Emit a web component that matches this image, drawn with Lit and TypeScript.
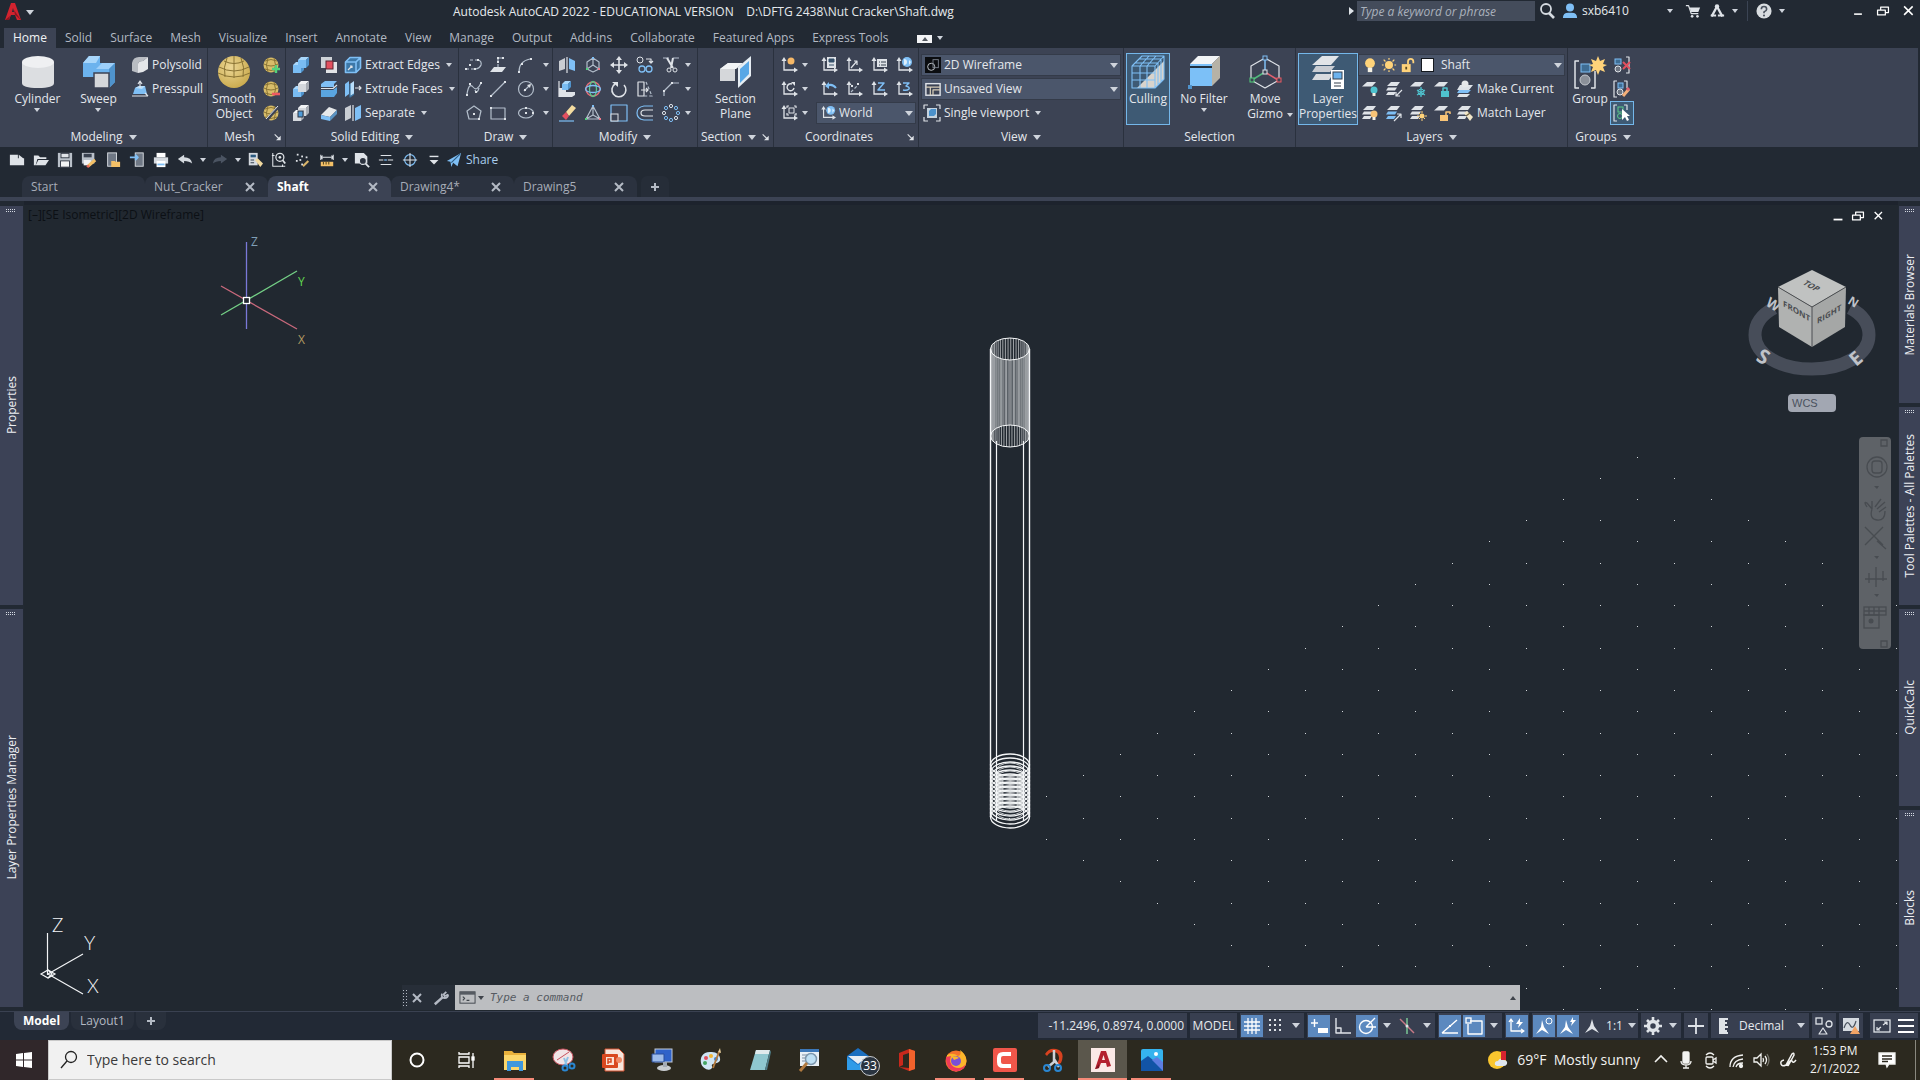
import { LitElement, html, svg, css, nothing } from "lit";
import { customElement } from "lit/decorators.js";
import { classMap } from "lit/directives/class-map.js";

/* ---------- icon drawing ---------- */

const W = "#dfe3e8";
const G = "#b3becb";
const B = "#7fbff5";
const GOLD = "#d8bd6a";
const SUN = "#ffd37a";
const TEAL = "#4fc3cf";

const box = (x: number, y: number, s: number, d: number, f: string, t: string, r: string) => svg`
  <path d="M${x} ${y + d}h${s}v${s}h${-s}z" fill=${f}/>
  <path d="M${x} ${y + d}l${d} ${-d}h${s}l${-d} ${d}z" fill=${t}/>
  <path d="M${x + s} ${y + d}l${d} ${-d}v${s}l${-d} ${d}z" fill=${r}/>`;
const blueBox = (x: number, y: number, s: number, d: number) => box(x, y, s, d, "#79bcf3", "#a9d7fb", "#4f93cc");
const greyBox = (x: number, y: number, s: number, d: number) => box(x, y, s, d, "#d5d9de", "#f2f4f6", "#a8adb5");
const line = (d: string, c = G, w = 1.2) =>
  svg`<path d=${d} fill="none" stroke=${c} stroke-width=${w} stroke-linejoin="round"/>`;
const dash = (d: string, c = G) =>
  svg`<path d=${d} fill="none" stroke=${c} stroke-width="1.2" stroke-dasharray="3 2"/>`;
const fill = (d: string, c = W) => svg`<path d=${d} fill=${c}/>`;
const dots = (pts: number[][], c = W) =>
  pts.map(([x, y]) => svg`<rect x=${x - 1} y=${y - 1} width="2" height="2" fill=${c}/>`);
const meshBall = () => svg`
  <circle cx="8" cy="9" r="7.5" fill=${GOLD}/>
  <path d="M1 8q7 4 14 0M2 5q6-3 12 0M2 13q6 3 12 0M5 2q-3 7 0 14M11 2q3 7 0 14" fill="none" stroke="#8a7434"/>`;
const axes = () => svg`
  <path d="M4 4V14H15" fill="none" stroke=${W} stroke-width="1.3"/>
  <path d="M1.500 5L4 1L6.500 5zM14 11.500L18 14L14 16.500z" fill=${W}/>`;
const sheet = (y: number, c = W) => svg`<path d="M6 ${y}h9l-4 4.500h-10z" fill=${c}/>`;
const stack = (c = W) => svg`
  <path d="M6 2h9l-3 4h-10z" fill=${W}/><path d="M3 7.500h9l-2 3h-9zM3 12h8l-2 3h-8z" fill=${c}/>`;
const bulb = (x: number, y: number, c: string) => svg`
  <circle cx=${x} cy=${y} r="3.500" fill=${c}/><rect x=${x - 1.5} y=${y + 3} width="3" height="3" fill="#f4f0e4"/>`;
const arrowA = () => svg`<path d="M9 2L11 9L16 16L9 12L2 16L7 9z" fill=${W}/>`;

const ICONS: Record<string, unknown> = {
  polysolid: svg`${fill("M1 7Q2 1 8 1H17L12 5Q7 5 7 8V17L1 15z", "#b9bdc3")}${fill("M7 8Q7 5 12 5L17 1V13L12 16L7 17z", "#e4e6e9")}`,
  presspull: svg`${fill("M4 8L8 6H14L16 14H2z", B)}${fill("M4 8L8 6H14L11 9z", "#b9defa")}${line("M9 8V2M7 4L9 1L11 4", W)}${line("M1 16H17M14 13L17 16", W)}`,
  meshPlus: svg`${meshBall()}${line("M13 9V17M9 13H17", "#52d27d", 2.4)}`,
  meshMinus: svg`${meshBall()}${line("M9 14H17", "#ee5a62", 2.6)}`,
  meshCut: svg`${meshBall()}${line("M3 17L16 2", "#3c4354", 3)}${line("M3 15L15 2", W, 1)}`,
  union: svg`${blueBox(1, 6, 8, 3)}${blueBox(6, 1, 8, 3)}`,
  subtract: svg`${blueBox(1, 6, 8, 3)}${greyBox(6, 1, 8, 3)}`,
  intersect: svg`${greyBox(6, 1, 8, 3)}${greyBox(1, 6, 8, 3)}<rect x="6" y="7" width="5" height="6" fill="#4f9ad6" stroke="#2c3442"/>`,
  interfere: svg`<rect x="1" y="1" width="11" height="11" fill="#cfd3d8"/><rect x="6" y="6" width="11" height="11" fill="#e2e4e7"/><rect x="6" y="5" width="7" height="8" fill="#e2505f" stroke="#5a2530"/>`,
  slice: svg`${fill("M1 4L5 1H17L14 4V7H1z", B)}${fill("M1 10H13L17 7V13L14 17H1z", "#5aa5e0")}${line("M1 8.500H13L17 5", W)}`,
  thicken: svg`${fill("M1 11L9 3L17 6L10 13z", "#e6e8ea")}${fill("M1 11L10 13V17L1 15z", B)}${fill("M10 13L17 6V10L10 17z", "#5a93c2")}`,
  extractEdges: svg`${fill("M1 6L6 1H17V12L12 17H1z", "#3d78a8")}${line("M1.500 6H12V16.500H1.500zM1.500 6L6 1.500H16.500L12 6M16.500 1.500V12L12 16.500", B, 1.6)}${line("M4 14L8 10M6 10H8V12", W)}`,
  extrudeFaces: svg`${fill("M1 4L5 1V14L1 17z", B)}${fill("M6 4L10 1V14L6 17z", "#b9defa")}${line("M6 4V17L10 14", "#3d78a8")}${line("M11 8H17M15 6L17 8L15 10", W)}`,
  separate: svg`${fill("M1 4L7 1V14L1 17z", "#c9cdd3")}${line("M9 1V17", W)}${fill("M11 4L17 1V14L11 17z", B)}`,

  poly3d: svg`${dash("M1 13H10M5 4H13", G)}${line("M13 4Q17 5 16 9Q15 12 11 13", G)}${dots([[1, 13], [10, 13], [5, 9], [13, 4]])}`,
  planar: svg`${fill("M5 11H17L13 16H1z")}${dash("M9 11V2H14")}${dots([[9, 2], [14, 2], [9, 6]])}`,
  arc: svg`${line("M2 16Q2 5 13 3", G)}${dots([[2, 16], [5, 8], [14, 3]])}`,
  spline: svg`${line("M2 14Q4 2 8 7T16 3M10 10Q12 15 14 8", G)}${dots([[2, 15], [5, 4], [11, 12], [16, 3]])}`,
  line: svg`${line("M2 16L16 2", G)}${dots([[2, 16], [16, 2]])}`,
  circle: svg`<circle cx="9" cy="9" r="7.5" fill="none" stroke=${G} stroke-width="1.2"/>${line("M7 11L13 5", G)}${dots([[8, 10]])}${fill("M14 4L10 5L13 8z")}`,
  polygon: svg`${line("M9 2L16 7L14 15H4L2 7z", G)}${dots([[9, 10], [14, 15]])}`,
  rect: svg`${line("M2 4H16V15H2z", G)}${dots([[2, 4], [16, 15]])}`,
  ellipse: svg`<ellipse cx="9" cy="9" rx="7.5" ry="5" fill="none" stroke=${G} stroke-width="1.2"/>${dots([[9, 9], [9, 4], [16, 9]])}`,

  mirror3d: svg`${fill("M1 5L7 2V13L1 15z", "#c9cdd3")}${line("M9 1V17", W)}${fill("M11 2L17 5V15L11 13z", B)}`,
  gizmoMove: svg`${line("M9 2L15 6V13L9 16L3 13V6zM9 9V2M9 9L3 13M9 9L15 13", G)}${dots([[9, 2]], B)}${dots([[3, 13]], "#52d27d")}${dots([[15, 13]], "#ee7a8a")}`,
  move: svg`${line("M9 3V15M3 9H15", W, 1.6)}${fill("M9 0L12 4H6zM9 18L12 14H6zM0 9L4 6V12zM18 9L14 6V12z")}`,
  copy: svg`<circle cx="4" cy="4" r="3" fill="none" stroke=${W}/>${line("M10 3H15V7M13 5L15 7L17 5", W)}<circle cx="6" cy="13" r="3" fill="none" stroke=${B} stroke-width="1.3"/><circle cx="13" cy="13" r="3" fill="none" stroke=${B} stroke-width="1.3"/>`,
  trim: svg`${line("M1 2H7M11 2H17", G)}${line("M5 2L11 12M11 2L9 12", W, 2)}<circle cx="7" cy="14" r="2" fill="none" stroke=${W}/><circle cx="13" cy="14" r="2" fill="none" stroke=${W}/>`,
  align3d: svg`${fill("M1 8H8V12H17V15L14 17H1z", W)}${blueBox(4, 1, 6, 3)}${line("M1 1V17", W)}`,
  rotate3d: svg`<circle cx="9" cy="9" r="7" fill="none" stroke="#e8707a" stroke-width="1.3"/><ellipse cx="9" cy="9" rx="3.500" ry="7.500" fill="none" stroke="#5cc98a" stroke-width="1.3"/><ellipse cx="9" cy="9" rx="7.500" ry="3.500" fill="none" stroke=${B} stroke-width="1.3"/>`,
  rotate: svg`${line("M5 4A7 7 0 1 0 14 5", W, 1.6)}${fill("M2 2H8V7z")}`,
  stretch: svg`${line("M2 2H8V16H2z", W)}${dash("M10 2L16 16H8")}${line("M5 10H12M10 8L12 10L10 12", W)}`,
  chamfer: svg`${line("M2 16V11L10 3H17", G)}${dots([[2, 11], [10, 3]])}`,
  erase: svg`${fill("M8 8L14 1L18 4L11 12z", "#f4dca0")}${fill("M8 8L11 12L8 16L4 12z", "#e2505f")}${line("M1 17H16", B)}`,
  scale3d: svg`${line("M9 2L16 15H2zM9 2V11L2 15M9 11L16 15", G)}${dots([[9, 2]], B)}${dots([[2, 15]], "#52d27d")}${dots([[16, 15]], "#ee7a8a")}`,
  scale: svg`${line("M1 17V1H17V17z", B)}<rect x="1" y="10" width="7" height="7" fill="#3c4354" stroke=${W}/>`,
  offset: svg`${line("M17 2H8Q1 3 1 9T8 16H17", B)}${line("M17 6H9Q5 6 5 9T9 12H17", W)}`,
  array: svg`${[[9, 2], [14, 4], [16, 9], [14, 14], [9, 16], [4, 14], [2, 9], [4, 4]].map(([x, y], i) => svg`<circle cx=${x} cy=${y} r="1.600" fill="none" stroke=${i % 3 ? B : W}/>`)}`,

  ucsOrigin: svg`${axes()}<circle cx="11" cy="5" r="3.500" fill="#f6b867"/>`,
  ucsPrev: svg`${axes()}<path d="M12 4A3.500 3.500 0 1 0 14 8" fill="none" stroke=${W} stroke-width="1.400"/><path d="M11 2h4v4z" fill=${W}/>`,
  ucsObj: svg`${axes()}${line("M7 4V2H9M14 2H16V4M16 9V11H14M9 11H7V9", W)}<rect x="9" y="4" width="5" height="5" fill="none" stroke=${W}/>`,
  ucsNamed: svg`${axes()}<rect x="7" y="1" width="9" height="11" fill=${W}/><path d="M9 3h5v3h-5zM9 9h5" fill="#35506b" stroke="#35506b"/>`,
  ucsView: svg`${axes()}${line("M6 12L12 5M12 9V5H9", W)}`,
  ucsTable: svg`${axes()}<rect x="7" y="3" width="10" height="8" fill=${W}/><path d="M9 6h1M9 9h1M11 6h5M11 9h5" stroke="#35404f"/>`,
  ucsWorld: svg`${axes()}<circle cx="12" cy="6" r="5" fill=${B}/><path d="M9 3q3 0 3 3t-3 3zM14 4l2 2-2 3z" fill="#dff0fd"/>`,
  ucsX: svg`${axes()}${line("M7 6Q12 3 16 8", B, 2)}${fill("M5 6L9 2V9z", B)}`,
  ucs3pt: svg`${axes()}${dash("M6 12L13 5")}${dots([[7, 6], [13, 4]])}`,
  ucsZ: svg`${axes()}${line("M8 3H14L8 10H15", B, 1.5)}`,
  ucsThree: svg`${axes()}${line("M8 3H14L11 6Q15 7 14 9Q12 11 8 10", B, 1.5)}`,

  wireStyle: svg`<rect width="18" height="18" fill="#0b0d10"/><circle cx="7" cy="11" r="4" fill="none" stroke="#cfd3d8"/><rect x="9" y="3" width="6" height="9" fill="none" stroke="#7d8590"/>`,
  viewIcon: svg`<rect x="1" y="3" width="16" height="13" fill="#3c4354" stroke=${W} stroke-width="1.600"/>${line("M1 7H17M6 16V7M9 16V10H17", "#d6cdb8", 1.4)}`,
  viewport: svg`${line("M1 5V1H5M13 1H17V5M17 13V17H13M5 17H1V13", W)}<rect x="4" y="4" width="10" height="10" fill="#c6d3df"/><path d="M6 7l2-2h5v5l-2 2H6z" fill="#4b91cb"/>`,

  bulbOn: svg`<circle cx="9" cy="7" r="5.500" fill=${SUN}/><rect x="6.500" y="12" width="5" height="5" fill="#f4f0e4"/>`,
  sun: svg`<circle cx="9" cy="9" r="4.500" fill=${SUN}/>${line("M9 1V3M9 15V17M1 9H3M15 9H17M3 3L5 5M13 13L15 15M3 15L5 13M13 5L15 3", SUN, 1.4)}`,
  unlock: svg`<rect x="2" y="8" width="10" height="9" fill=${SUN}/><rect x="6" y="11" width="2" height="3" fill="#5b4a20"/>${line("M9 8V5Q9 2 12 2T15 5V7", SUN, 2)}`,
  layOff: svg`${sheet(2)}${bulb(13, 10, TEAL)}`,
  layIso: svg`${stack()}${line("M17 10L11 16M11 12V16H15", W)}`,
  layFreeze: svg`${sheet(2)}<circle cx="12" cy="12" r="3" fill="none" stroke=${TEAL}/>${line("M12 7V17M8 10L16 15M16 10L8 15", TEAL, 1.2)}`,
  layLock: svg`${sheet(2)}<rect x="8" y="11" width="8" height="6" fill=${TEAL}/>${line("M10 11V8H14V11", TEAL, 1.5)}`,
  makeCurrent: svg`${fill("M4 5h13l-4 5h-12z")}${fill("M3 10h12l-3 3h-11z", B)}${fill("M3 14h11l-3 3h-10z")}<circle cx="9" cy="4" r="3.500" fill="#e6e8ea"/>`,
  layOn: svg`${stack()}${bulb(13, 10, "#f8c477")}`,
  layUniso: svg`${stack(B)}${line("M9 17L16 10M12 10H16V14", W)}`,
  layThaw: svg`${stack()}<circle cx="13" cy="12" r="2.500" fill=${SUN}/>${line("M13 7V9M13 15V17M8 12H10M16 12H18M10 9L11 10M15 14L16 15M10 15L11 14", SUN, 1)}`,
  layUnlock: svg`${sheet(2)}<rect x="7" y="11" width="8" height="6" fill="#f8c477"/>${line("M13 11V8H17V10", "#f8c477", 1.5)}`,
  matchLayer: svg`${stack()}${fill("M8 9L11 7L17 13L14 17z", "#f1e6c8")}${line("M10 12L14 9", "#6f6240")}`,
  ungroup: svg`${line("M13 1H16V17H13", W)}<rect x="2" y="3" width="6" height="5" fill="#3f6d93" stroke=${B}/><circle cx="5" cy="13" r="3" fill="#6d7480" stroke=${W}/>${line("M10 6L17 13M17 6L10 13", "#e2505f", 2)}`,
  groupEdit: svg`${line("M4 1H1V17H4M11 1H14V8", W)}<rect x="5" y="3" width="5" height="5" fill="#3f6d93" stroke=${B}/><circle cx="7" cy="12" r="3" fill="#6d7480" stroke=${W}/>${line("M10 16L16 9", "#f4b07a", 3)}${line("M14 10L16 8", "#e2606f", 3)}`,
  groupSel: svg`${line("M4 1H1V17H4M11 1H14V6", W)}<rect x="5" y="3" width="5" height="5" fill="none" stroke="#5cc98a"/><circle cx="7" cy="12" r="2.500" fill="none" stroke="#5cc98a"/>${fill("M9 5V16L12 13L14 17L16 16L14 12H17z", "#fff")}`,

  new: fill("M1 3H10V7H17V15H1zM11 3L16 7H11z"),
  open: svg`${fill("M1 4H6L8 6H15V8H5L3 15H1z")}${fill("M6 9H18L14 15H3z")}`,
  save: svg`${fill("M1 1H17V17H1z", "#b9c0c9")}<rect x="4" y="1" width="10" height="6" fill="#2b323e"/><rect x="5" y="2" width="8" height="4" fill=${W}/><rect x="4" y="10" width="10" height="7" fill="#f3f4f5" stroke="#2b323e"/>`,
  saveAs: svg`${fill("M1 1H15V13H1z", "#b9c0c9")}<rect x="3" y="2" width="9" height="4" fill="#3a4250"/><rect x="3" y="9" width="8" height="6" fill="#f3f4f5"/>${line("M8 16L16 9", "#f3c067", 3.4)}${line("M7 17L9 15", "#e86a5a", 3)}`,
  fromWeb: svg`<rect x="3" y="1" width="10" height="15" fill="#6f7885" stroke=${W}/>${fill("M7 10H11L12 11H17V17H7z", "#f3c067")}`,
  toWeb: svg`<rect x="7" y="1" width="9" height="15" fill="#6f7885" stroke=${W}/>${line("M1 6H9M7 3L10 6L7 9", B, 2)}`,
  print: svg`<rect x="4" y="1" width="10" height="5" fill="#fff"/>${fill("M1 6H17V13H1z", "#d5dae0")}<rect x="4" y="10" width="10" height="7" fill="#fff"/>${line("M5 14H13", B, 2)}`,
  undo: svg`${fill("M1 8L8 3V6Q16 6 17 13Q14 10 8 10V13z", "#d5dae0")}`,
  redo: svg`${fill("M17 8L10 3V6Q2 6 1 13Q4 10 10 10V13z", "#4b5462")}`,
  matchProp: svg`<rect x="2" y="1" width="10" height="14" fill="#d5dae0"/><path d="M4 3h6v3H4z" fill="#2b5a80"/>${fill("M9 9L12 7L18 13L15 17z", "#f1d9a0")}${line("M4 9H8M4 12H8", "#35404f")}`,
  zoomObj: svg`${line("M2 1V16H16M1 4H4M13 14V17", W)}<circle cx="10" cy="6" r="4.500" fill="none" stroke=${W} stroke-width="1.400"/><circle cx="10" cy="6" r="1.500" fill=${W}/>${line("M13 9L16 13", W, 2)}`,
  points: svg`${dots([[3, 3], [8, 5], [2, 10], [6, 9], [8, 14], [13, 6]])}${line("M9 16L15 10", "#d9b46a", 2.4)}`,
  measure: svg`${line("M2 3V9M16 3V9M2 6H16M4 4L2 6L4 8M14 4L16 6L14 8", W)}<rect x="2" y="11" width="14" height="5" fill="#f3c067"/>${line("M5 11V14M8 11V14M11 11V14", "#5b4a20")}`,
  preview: svg`${fill("M1 1H11L15 5V13H1z")}<circle cx="10" cy="10" r="4" fill="#2b323e" stroke=${W} stroke-width="1.500"/>${line("M13 13L17 17", W, 2)}`,
  layers2: svg`${line("M3 4H15M1 9H6M11 9H17M3 14H15", W, 1.2)}${line("M7 9H10", B, 1.4)}`,
  target: svg`<circle cx="9" cy="9" r="6" fill="none" stroke=${B} stroke-width="1.300"/>${line("M9 1V17M1 9H17", W)}`,
  more: svg`${line("M4 5H14", W, 1.6)}${fill("M4 9H14L9 14z")}`,
  send: svg`${fill("M1 10L17 1L13 16L8 12L6 17L5 11z", B)}${line("M6 12L16 2", "#2b5a80")}`,

  search: svg`<circle cx="8" cy="7" r="5" fill="none" stroke="#d5dae0" stroke-width="1.800"/>${line("M11 11L16 16", "#d5dae0", 2.6)}`,
  user: svg`<circle cx="9" cy="5" r="4.500" fill=${B}/>${fill("M1 17Q1 10 9 11Q17 10 17 17z", B)}`,
  cart: svg`${line("M1 3H4L7 12H15", W, 1.4)}${fill("M5 5H17L15 10H7z")}<circle cx="8" cy="15" r="1.500" fill=${W}/><circle cx="14" cy="15" r="1.500" fill=${W}/>`,
  appA: svg`${line("M3 15L9 4L15 15", W, 2.6)}${line("M2 14H8M10 14H17", W, 2.4)}<circle cx="9" cy="4" r="2.500" fill=${W}/>`,
  help: svg`<circle cx="9" cy="9" r="8.500" fill="#d9dde1"/>${line("M6 7Q6 4 9 4T12 7Q12 8.500 9 10V11.500", "#4a525e", 1.800)}<circle cx="9" cy="14" r="1.200" fill="#4a525e"/>`,
  wmin: line("M4 13H14", "#fff", 2),
  wrestore: line("M2 8H12V14H2zM6 8V4H16V11H12", "#fff", 1.6),
  wclose: line("M4 3L15 14M15 3L4 14", "#fff", 2),
  close: line("M5 5L13 13M13 5L5 13", "#b4bac4", 2),
  plus: line("M9 5V13M5 9H13", "#b4bac4", 2),
  launcher: svg`${line("M4 5L11 12", W, 1.6)}${fill("M13 7V14H6z")}`,

  terminal: svg`<rect x="1" y="3" width="16" height="12" fill="none" stroke="#3f444b"/><rect x="1" y="3" width="16" height="3" fill="#555a61"/>${line("M4 8L6 10L4 12M8 12H11", "#3f444b")}`,
  wrench: svg`${line("M2 16L11 8", "#b4bac4", 2.8)}${line("M15 2L12 5L13 7L17 5M10 4Q9 9 13 9T17 5", "#b4bac4", 2)}`,

  sGrid: line("M1 5H17M1 9H17M1 13H17M5 1V17M9 1V17M13 1V17", "#fff", 1.3),
  sSnap: dots([[3, 3], [8, 3], [13, 3], [3, 8], [8, 8], [13, 8], [3, 13], [8, 13], [13, 13]]),
  sDyn: svg`${line("M1 6H8M4.500 2V10", "#fff", 1.4)}<rect x="8" y="11" width="10" height="5" fill="#fff"/>`,
  sOrtho: svg`${line("M2 1V16H17M2 11H7V16", W, 1.4)}`,
  sPolar: svg`<circle cx="8" cy="10" r="6.500" fill="none" stroke="#fff" stroke-width="1.400"/>${line("M8 10L17 1M8 10H18", "#fff", 1.4)}`,
  sIso: svg`${line("M9 1V17", "#7fd09a", 1.4)}${line("M2 2L16 16", "#c87a86", 1.4)}<circle cx="9" cy="9" r="1.500" fill=${W}/>`,
  sTrack: svg`${line("M1 16H17M1 16L16 3", "#fff", 1.4)}${dots([[9, 9]], "#fff")}`,
  sOsnap: svg`${line("M5 4H17V17H3V7", "#fff", 1.4)}<rect x="1" y="1" width="5" height="5" fill="none" stroke="#fff" stroke-width="1.300"/>`,
  sDucs: svg`${line("M3 3V14H15M1 5L3 2L5 5M13 12L16 14L13 16", "#fff", 1.3)}${fill("M12 1L8 7H11L10 11L15 5H12z", "#fff")}`,
  sAnnoVis: svg`${fill("M7 3L9 10L14 17L7 13L1 17L6 10z", "#fff")}<circle cx="14" cy="4" r="3" fill="none" stroke="#fff"/>`,
  sAnnoAuto: svg`${fill("M7 3L9 10L14 17L7 13L1 17L6 10z", "#fff")}${fill("M14 0L11 5H13L12 9L17 3H14z", "#fff")}`,
  sAnno: arrowA(),
  sGear: svg`<circle cx="9" cy="9" r="4.500" fill="none" stroke=${W} stroke-width="3.500"/>${line("M9 0V4M9 14V18M0 9H4M14 9H18M3 3L5 5M13 13L15 15M3 15L5 13M13 5L15 3", W, 2.6)}`,
  sPlus: line("M9 1V17M1 9H17", W, 1.8),
  sRuler: svg`${fill("M5 1H14V3H11V5H13V7H11V9H14V11H11V13H13V15H14V17H5z")}`,
  sShapes: svg`<rect x="1" y="1" width="6" height="6" fill="none" stroke=${W} stroke-width="1.300"/><circle cx="14" cy="7" r="3" fill="none" stroke=${W} stroke-width="1.300"/>${line("M8 11L12 17H4z", W)}`,
  sHw: svg`<rect x="1" y="1" width="16" height="13" fill="#d5dae0"/>${line("M2 11Q5 2 8 8T14 4", "#4a525e")}${fill("M13 9L18 17H8z", "#f2a465")}`,
  sFull: svg`<rect x="1" y="3" width="16" height="12" fill="none" stroke=${W} stroke-width="1.300"/>${line("M10 8L14 5M11 5H14V8M8 10L4 13M4 10V13H7", W)}`,
  sMenu: line("M1 3H17M1 9H17M1 15H17", "#fff", 2),
};

const LARGE: Record<string, unknown> = {
  cylinder: svg`<path d="M1 7V28Q1 33 17 33T33 28V7z" fill="#dcdee1"/><ellipse cx="17" cy="7" rx="16" ry="6" fill="#eff0f2"/>`,
  sweep: svg`${fill("M1 8L7 1H18V8H33L33 27L27 33H14V22H1z", "#6cb3ee")}${fill("M1 8L7 1H18L14 8z", "#a9d7fb")}${fill("M14 14L20 8H33L27 14z", "#9dcff9")}${fill("M27 14L33 8V27L27 33z", "#4f93cc")}<rect x="12" y="18" width="15" height="15" fill="#d5d7da" stroke="#3c4354" stroke-width="1.500"/>`,
  smooth: svg`<defs><radialGradient id="gold" cx=".4" cy=".35" r=".7"><stop offset="0" stop-color="#ecd795"/><stop offset="1" stop-color="#c9a94c"/></radialGradient></defs><circle cx="17" cy="17" r="16" fill="url(#gold)"/>${line("M2 12Q17 20 32 12M1 18Q17 26 33 18M7 6Q17 11 27 6M17 1V23M10 3Q6 12 8 22M24 3Q28 12 26 22", "#8a7434", 1)}`,
  section: svg`${fill("M1 14L9 8H22L16 14V26H1z", "#d5d7da")}${fill("M1 14L9 8H24L17 14z", "#f2f4f6")}${fill("M19 12L32 1V21L19 33z", "#e6edf3")}${fill("M21 14L30 6V19L21 28z", "#58a7e6")}`,
  culling: svg`${fill("M6 33L33 6V24L24 33z", "#d8d3cc")}${line("M1 11V33H24V11zM1 11L11 1H33V24L24 33M24 11L33 1M9 11V33M16 11V33M1 18H24M1 25H24M4 8H27M8 4H30M9 11L18 1M16 11L25 1M27 8V30M30 5V27", B, 1.1)}`,
  noFilter: svg`${box(3, 1, 22, 8, "#7cc0f7", "#f2f4f6", "#b6b2a6")}<path d="M3 12h22" fill="none" stroke="#20303f" stroke-width="2"/><rect x="1" y="30" width="4" height="4" fill="#4f93cc"/>`,
  gizmo: svg`${line("M17 3L31 11V25L17 33L3 25V11z", W, 1.2)}${line("M17 17V3", B, 1.5)}${line("M17 17L4 25", "#52b87d", 1.5)}${line("M17 17L30 25", "#e2606f", 1.5)}<rect x="15" y="15" width="4" height="4" fill="#3c4354" stroke=${W}/><rect x="15" y="1" width="4" height="4" fill="#3c4354" stroke=${B}/><rect x="2" y="23" width="4" height="4" fill="#3c4354" stroke="#52d27d"/><rect x="29" y="23" width="4" height="4" fill="#3c4354" stroke="#ee5a62"/>`,
  layerProps: svg`${fill("M11 1H28L20 10H1z", "#e2e5e8")}${fill("M5 11H24L19 17H1z", "#c9cdd3")}${fill("M5 19H22L18 25H1z", "#d8dbdf")}<rect x="20" y="15" width="13" height="19" fill="#fff"/><rect x="22" y="17" width="9" height="7" fill="#6cb3ee" stroke="#35404f"/>${line("M23 28H30M23 31H30", "#35404f")}`,
  group: svg`${line("M6 6H2V33H6M18 33H22V16", W, 1.5)}<rect x="8" y="9" width="9" height="8" fill="#3f6d93" stroke=${B}/><circle cx="12" cy="25" r="5" fill="#8b9099" stroke="#c3c7cd"/><path d="M25 1l2 5 5-2-2 5 4 1-4 2 2 5-5-2-2 5-2-5-5 2 2-5-4-2 4-1-2-5 5 2z" fill=${SUN}/>`,
};

const ic = (name: string, size = 18) =>
  html`<svg class="ic" width=${size} height=${size} viewBox="0 0 18 18" aria-hidden="true">${ICONS[name]}</svg>`;
const big = (name: string) =>
  html`<svg class="ic" width="34" height="34" viewBox="0 0 34 34" aria-hidden="true">${LARGE[name]}</svg>`;
const caret = (cls = "") => html`<span class="caret ${cls}"></span>`;

const shared = css`
  :host, * { box-sizing: border-box; }
  button, input, select { font: inherit; color: inherit; margin: 0; padding: 0; border: 0; background: none; border-radius: 0; }
  button { display: flex; align-items: center; justify-content: center; white-space: nowrap; }
  a { color: inherit; text-decoration: none; }
  .ic { display: block; flex: none; }
  .caret { flex: none; width: 0; height: 0; border: 3px solid transparent; border-top: 4px solid #cfd4dc; border-bottom: 0; }
  .caret.mid { border-width: 4px; border-top-width: 5px; border-bottom: 0; }
  .caret.up { border-top: 0; border-bottom: 4px solid #555a61; }
  .caret.east { border: 4px solid transparent; border-left: 5px solid #dfe3e8; border-right: 0; }
  .spacer { flex: 1; }
`;

/* ---------- title bar ---------- */

@customElement("cad-title")
class CadTitle extends LitElement {
  static styles = [shared, css`
    :host { display: flex; height: 28px; align-items: flex-start; color: #e6e9ed; }
    .app { width: 453px; height: 24px; padding-left: 4px; display: flex; align-items: center; gap: 4px; }
    .name { margin: 0; font-size: 12px; font-weight: 400; line-height: 24px; white-space: pre; }
    .end { display: flex; align-items: center; height: 22px; }
    .tool { width: 24px; height: 22px; }
    .drop { width: 12px; height: 22px; }
    input { width: 178px; height: 20px; padding: 0 3px; background: #444c5b; font-style: italic; }
    input::placeholder { color: #aab1bc; opacity: 1; }
    .user { width: 122px; height: 22px; justify-content: space-between; padding: 0 8px 0 3px; }
    .who { display: flex; align-items: center; gap: 4px; }
    .rule { width: 1px; height: 20px; margin: 0 4px 0 6px; background: #3b4454; }
    .win { display: flex; margin-left: 57px; }
    .win button { width: 25px; height: 24px; }
  `];
  render() {
    return html`
      <div class="app">
        <button aria-label="Application menu">
          <svg class="ic" width="18" height="20" viewBox="0 0 18 20" aria-hidden="true">
            <path d="M1 18L7 1H11L17 18H13L11 13H7L5 18z" fill="#d2232f"/>
            <path d="M1 18L6 14L5 18zM17 18L10 8L11 13z" fill="#8d1520"/>
            <path d="M8 10L9 6L10 10z" fill="#222933"/>
          </svg>
        </button>
        ${caret("mid")}
      </div>
      <h1 class="name">Autodesk AutoCAD 2022 - EDUCATIONAL VERSION    D:\\DFTG 2438\\Nut Cracker\\Shaft.dwg</h1>
      <span class="spacer"></span>
      <div class="end">
        <button class="drop" aria-label="Collapse search">${caret("east")}</button>
        <input type="search" aria-label="Search help" placeholder="Type a keyword or phrase" />
        <button class="tool" aria-label="Search">${ic("search")}</button>
        <button class="user"><span class="who">${ic("user", 16)}sxb6410</span>${caret()}</button>
        <button class="tool" aria-label="Cart">${ic("cart", 16)}</button>
        <button class="tool" aria-label="Autodesk apps">${ic("appA", 16)}</button>
        <button class="drop" aria-label="Apps menu">${caret()}</button>
        <span class="rule"></span>
        <button class="tool" aria-label="Help">${ic("help", 16)}</button>
        <button class="drop" aria-label="Help menu">${caret()}</button>
        <div class="win">
          <button aria-label="Minimize">${ic("wmin", 14)}</button>
          <button aria-label="Restore">${ic("wrestore", 14)}</button>
          <button aria-label="Close">${ic("wclose", 14)}</button>
        </div>
      </div>`;
  }
}

/* ---------- ribbon ---------- */

@customElement("cad-ribbon")
class CadRibbon extends LitElement {
  static styles = [shared, css`
    :host { display: block; color: #e4e7ec; }
    .tabs { display: flex; height: 20px; padding-left: 4px; align-items: flex-end; color: #b3b9c3; }
    .tabs button { height: 20px; padding: 0 9px; }
    .tabs .on { background: #3c4354; color: #f1f3f5; }
    .tabs .flip { width: 15px; height: 8px; padding: 0; margin: 0 4px 5px 20px; background: #f3f4f6; }
    .tabs .menu { width: 8px; padding: 0; }
    .bar { display: flex; height: 99px; background: #3c4354; margin-right: 2px; }
    .panel { flex: none; display: flex; flex-direction: column; border-right: 1px solid #2a313e; }
    .body { flex: 1; display: flex; align-items: flex-start; padding-top: 5px; }
    .foot { display: flex; height: 20px; align-items: center; }
    .foot .name { flex: 1; gap: 6px; }
    .foot .launch { width: 14px; height: 18px; }
    .modeling { width: 208px; } .modeling .body { padding-left: 7px; }
    .mesh { width: 78px; }
    .solid { width: 173px; } .solid .body { padding-left: 3px; }
    .draw { width: 94px; } .draw .body { padding-left: 3px; }
    .modify { width: 145px; } .modify .body { padding-left: 1px; }
    .section { width: 76px; }
    .coords { width: 145px; } .coords .body { padding-left: 3px; }
    .view { width: 205px; } .view .body { padding: 5px 2px 0; }
    .select { width: 172px; } .select .body { padding-left: 2px; }
    .layers { width: 272px; } .layers .body { padding-left: 2px; }
    .groups { width: 70px; border-right: 0; } .groups .body { padding-left: 2px; }
    .large { height: 72px; flex-direction: column; justify-content: flex-start; border: 1px solid transparent; padding-top: 1px; line-height: 15px; white-space: normal; gap: 2px; }
    .large.on, .small.on { background: #3e5a74; border: 1px solid #74b7ea; }
    .w61 { width: 61px; } .w52 { width: 52px; } .w75 { width: 75px; } .w44 { width: 44px; }
    .w68 { width: 68px; } .w54 { width: 54px; } .w60 { width: 60px; } .w40 { width: 40px; }
    .large .lines { display: flex; flex-direction: column; align-items: center; }
    .large .side { display: flex; align-items: center; gap: 4px; margin-right: -10px; }
    .large .caret { margin-top: 2px; }
    .grid { display: grid; grid-auto-rows: 24px; align-items: center; justify-items: center; }
    .gtext { justify-items: start; }
    .g1 { grid-template-columns: 24px; }
    .gsolid { grid-template-columns: 28px 25px auto; justify-items: start; }
    .gdraw { grid-template-columns: 24px 24px 32px 8px; }
    .gmodify { grid-template-columns: repeat(5, 26px) 8px; }
    .gcoords { grid-template-columns: 24px 8px 7px repeat(4, 25px); }
    .glayers { grid-template-columns: repeat(4, 24px) auto; justify-items: start; }
    .gview { flex: 1; grid-template-columns: 1fr; justify-items: stretch; }
    .small { width: 24px; height: 24px; border: 1px solid transparent; }
    .text { height: 24px; padding: 0 2px; gap: 3px; }
    .text .caret { margin-left: 3px; }
    .combo { display: flex; align-items: center; gap: 3px; width: 100%; height: 22px; padding: 0 2px 0 3px; background: #4b566b; border: 1px solid #343b49; }
    .combo select { flex: 1; min-width: 0; height: 20px; appearance: none; outline: none; }
    .combo.c4 { grid-column: 4 / span 4; }
    .combo.c5 { grid-column: 1 / span 5; width: 207px; }
    .combo.c5 .swatch { width: 13px; height: 14px; margin: 0 4px 0 2px; background: #fff; border: 1px solid #15191f; }
  `];

  private tabs = ["Home", "Solid", "Surface", "Mesh", "Visualize", "Insert", "Annotate", "View", "Manage", "Output",
    "Add-ins", "Collaborate", "Featured Apps", "Express Tools"];

  private panel(cls: string, name: string, body: unknown, menu = true, launch = false) {
    return html`<section class="panel ${cls}">
      <div class="body">${body}</div>
      <div class="foot">
        <button class="name">${name}${menu ? caret("mid") : nothing}</button>
        ${launch ? html`<button class="launch" aria-label="${name} settings">${ic("launcher", 12)}</button>` : nothing}
      </div>
    </section>`;
  }
  private large(cls: string, icon: string, lines: string[], menu = false) {
    return html`<button class="large ${cls}">${big(icon)}
      <span class="lines">${lines.map((l) => html`<span>${l}</span>`)}${menu ? caret() : nothing}</span></button>`;
  }
  private small(icon: string, on = false) {
    return html`<button class=${classMap({ small: true, on })} aria-label=${icon}>${ic(icon)}</button>`;
  }
  private text(icon: string, label: string, menu = false) {
    return html`<button class="text">${ic(icon)}<span>${label}</span>${menu ? caret() : nothing}</button>`;
  }
  private drop() {
    return html`<button aria-label="More">${caret()}</button>`;
  }
  private combo(cls: string, icons: unknown, label: string, value: string) {
    return html`<div class="combo ${cls}">${icons}<select aria-label=${label}><option>${value}</option></select>${caret("mid")}</div>`;
  }

  render() {
    return html`
      <nav class="tabs">
        ${this.tabs.map((t, i) => html`<button class=${i ? "" : "on"}>${t}</button>`)}
        <button class="flip" aria-label="Minimize ribbon">${caret("up")}</button>
        <button class="menu" aria-label="Ribbon options">${caret()}</button>
      </nav>
      <div class="bar">
        ${this.panel("modeling", "Modeling", html`
          ${this.large("w61", "cylinder", ["Cylinder"], true)}
          ${this.large("w61", "sweep", ["Sweep"], true)}
          <div class="grid gtext">${this.text("polysolid", "Polysolid")}${this.text("presspull", "Presspull")}</div>`)}
        ${this.panel("mesh", "Mesh", html`
          ${this.large("w52", "smooth", ["Smooth", "Object"])}
          <div class="grid g1">${["meshPlus", "meshMinus", "meshCut"].map((n) => this.small(n))}</div>`, false, true)}
        ${this.panel("solid", "Solid Editing", html`<div class="grid gsolid">
          ${this.small("union")}${this.small("interfere")}${this.text("extractEdges", "Extract Edges", true)}
          ${this.small("subtract")}${this.small("slice")}${this.text("extrudeFaces", "Extrude Faces", true)}
          ${this.small("intersect")}${this.small("thicken")}${this.text("separate", "Separate", true)}
        </div>`)}
        ${this.panel("draw", "Draw", html`<div class="grid gdraw">
          ${[["poly3d", "planar", "arc"], ["spline", "line", "circle"], ["polygon", "rect", "ellipse"]].map((r) =>
            html`${r.map((n) => this.small(n))}${this.drop()}`)}
        </div>`)}
        ${this.panel("modify", "Modify", html`<div class="grid gmodify">
          ${[["mirror3d", "gizmoMove", "move", "copy", "trim"], ["align3d", "rotate3d", "rotate", "stretch", "chamfer"],
            ["erase", "scale3d", "scale", "offset", "array"]].map((r) => html`${r.map((n) => this.small(n))}${this.drop()}`)}
        </div>`)}
        ${this.panel("section", "Section", this.large("w75", "section", ["Section", "Plane"]), true, true)}
        ${this.panel("coords", "Coordinates", html`<div class="grid gcoords">
          ${this.small("ucsOrigin")}${this.drop()}<span></span>
          ${["ucsNamed", "ucsView", "ucsTable", "ucsWorld"].map((n) => this.small(n))}
          ${this.small("ucsPrev")}${this.drop()}<span></span>
          ${["ucsX", "ucs3pt", "ucsZ", "ucsThree"].map((n) => this.small(n))}
          ${this.small("ucsObj")}${this.drop()}
          ${this.combo("c4", ic("ucsWorld", 16), "UCS", "World")}
        </div>`, false, true)}
        ${this.panel("view", "View", html`<div class="grid gview">
          ${this.combo("", ic("wireStyle", 16), "Visual style", "2D Wireframe")}
          ${this.combo("", ic("viewIcon", 16), "Saved view", "Unsaved View")}
          <div>${this.text("viewport", "Single viewport", true)}</div>
        </div>`)}
        ${this.panel("select", "Selection", html`
          ${this.large("w44 on", "culling", ["Culling"])}
          ${this.large("w68", "noFilter", ["No Filter"], true)}
          <button class="large w54">${big("gizmo")}
            <span class="lines"><span>Move</span><span class="side"><span>Gizmo</span>${caret()}</span></span></button>`, false)}
        ${this.panel("layers", "Layers", html`
          ${this.large("w60 on", "layerProps", ["Layer", "Properties"])}
          <div class="grid glayers">
            ${this.combo("c5", html`${ic("bulbOn", 16)}${ic("sun", 16)}${ic("unlock", 16)}<span class="swatch"></span>`, "Layer", "Shaft")}
            ${["layOff", "layIso", "layFreeze", "layLock"].map((n) => this.small(n))}${this.text("makeCurrent", "Make Current")}
            ${["layOn", "layUniso", "layThaw", "layUnlock"].map((n) => this.small(n))}${this.text("matchLayer", "Match Layer")}
          </div>`)}
        ${this.panel("groups", "Groups", html`
          ${this.large("w40", "group", ["Group"])}
          <div class="grid g1">${this.small("ungroup")}${this.small("groupEdit")}${this.small("groupSel", true)}</div>`)}
      </div>`;
  }
}

/* ---------- quick access bar and drawing tabs ---------- */

@customElement("cad-tabs")
class CadTabs extends LitElement {
  static styles = [shared, css`
    :host { display: block; }
    .quick { display: flex; height: 26px; align-items: center; padding-left: 5px; color: #a9cdec; }
    .quick button { width: 24px; height: 24px; }
    .quick .d { width: 11px; }
    .quick .share { width: auto; gap: 4px; }
    .files { display: flex; height: 24px; padding-left: 22px; align-items: flex-end; color: #a7adb8; }
    .file { display: flex; width: 123px; height: 21px; align-items: center; padding: 0 9px; background: #2b323f; border-radius: 8px 8px 0 0; }
    .file a { flex: 1; }
    .file.on { background: #3c4354; color: #fff; font-weight: 700; }
    .add { width: 28px; height: 21px; margin-left: 4px; background: #262d38; border-radius: 6px 6px 0 0; }
    .band { height: 4px; background: #3c4354; }
  `];
  private quick = ["new", "open", "save", "saveAs", "fromWeb", "toWeb", "print", "undo", "|", "redo", "|", "matchProp",
    "zoomObj", "points", "measure", "|", "preview", "layers2", "target", "more"];
  private files = ["Start", "Nut_Cracker", "Shaft", "Drawing4*", "Drawing5"];
  render() {
    return html`
      <div class="quick">
        ${this.quick.map((n) => n === "|"
          ? html`<button class="d" aria-label="History">${caret()}</button>`
          : html`<button aria-label=${n}>${ic(n, 16)}</button>`)}
        <button class="share">${ic("send", 16)}Share</button>
      </div>
      <nav class="files">
        ${this.files.map((f, i) => html`<div class="file ${i === 2 ? "on" : ""}"><a href="#">${f}</a>
          ${i ? html`<button aria-label="Close ${f}">${ic("close", 18)}</button>` : nothing}</div>`)}
        <button class="add" aria-label="New drawing">${ic("plus", 18)}</button>
      </nav>
      <div class="band"></div>`;
  }
}

/* ---------- palettes docked at the sides ---------- */

const range = (n: number) => Array.from({ length: n }, (_, i) => i);

@customElement("cad-dock")
class CadDock extends LitElement {
  static properties = { names: { attribute: false } };
  declare names: string[];
  static styles = [shared, css`
    :host { display: flex; flex-direction: column; gap: 4px; padding: 5px 0 4px; }
    button { flex: 1; position: relative; background: #3c4256; color: #eceef2; }
    .grip { position: absolute; top: 3px; left: 6px; }
    .name { writing-mode: vertical-rl; transform: rotate(180deg); }
  `];
  render() {
    return html`${this.names.map((n) => html`<button>
      <svg class="ic grip" width="10" height="4" viewBox="0 0 10 4" aria-hidden="true" fill="#d5dae2">
        ${range(5).map((i) => svg`<rect x=${i * 2} y="0" width="1" height="1"/><rect x=${i * 2} y="2" width="1" height="1"/>`)}
      </svg><span class="name">${n}</span></button>`)}`;
  }
}

/* ---------- model space ---------- */

@customElement("cad-canvas")
class CadCanvas extends LitElement {
  static styles = [shared, css`
    :host { display: block; position: relative; overflow: hidden; background: #212830; border-top: 4px solid #1d232d; }
    .scene { position: absolute; left: 0; top: -4px; width: 100%; height: 820px; }
    .scene text { font-size: 12px; }
    .scene .ucs { font-family: Lato, "Open Sans", sans-serif; font-weight: 300; font-size: 19px; fill: #f2f4f6; }
    .state { position: absolute; left: 4px; top: 1px; display: flex; height: 18px; color: #0c1015; }
    .ctl { position: absolute; right: 10px; top: 1px; display: flex; }
    .ctl button { width: 20px; height: 20px; }
    .cube { position: absolute; right: 13px; top: 57px; }
    .cube text { font-family: "Open Sans", sans-serif; font-weight: 700; }
    .wcs { position: absolute; right: 62px; top: 189px; width: 48px; height: 18px; justify-content: flex-start; padding-left: 4px; background: #a2a7b2; border-radius: 4px; color: #4b525e; font-family: "Liberation Sans", sans-serif; font-size: 11px; }
    .nav { position: absolute; right: 7px; top: 232px; width: 32px; height: 212px; background: #5e6267; border-radius: 4px; }
    .cmd { position: absolute; left: 378px; right: 378px; bottom: 1px; display: flex; height: 25px; background: #272e38; }
    .grip { width: 6px; margin: 4px 0; background: radial-gradient(circle, #b4bac4 0 1px, transparent 1px) 0 0 / 3px 3px; }
    .cmd .x { width: 18px; }
    .cmd .w { width: 29px; }
    .line { flex: 1; display: flex; align-items: center; gap: 2px; padding: 0 4px; background: #bcbec1; }
    .line .caret { border-top-color: #3f444b; }
    .line .caret.up { border-bottom-color: #3f444b; }
    .line input { flex: 1; min-width: 0; height: 23px; padding-left: 4px; font: italic 11px "DejaVu Sans Mono", monospace; color: #4a4f57; outline: none; }
    .line input::placeholder { color: #565b62; opacity: 1; }
  `];

  /* isometric drawing grid: two diagonal directions from its top corner */
  private grid() {
    const out: unknown[] = [];
    for (let i = 0; i <= 17; i++)
      for (let j = 0; j < 36; j++) {
        const x = Math.round(1613 + (j - i) * 36.93);
        const y = Math.round(255.5 + (i + j) * 21.24);
        if (x < 1880 && y < 812) out.push(svg`<rect x=${x} y=${y} width="1" height="1"/>`);
      }
    return svg`<g fill="#d4d8dc">${out}</g>`;
  }

  private shaft() {
    const cx = 986;
    const knurl = range(44).map((k) => {
      const a = (k / 44) * Math.PI * 2 + 0.04;
      const x = cx + Math.cos(a) * 19;
      const dy = Math.sin(a) * 11;
      return svg`<path d="M${x} ${148 + dy}V${235 + dy}"/>`;
    });
    return svg`<g fill="none" stroke="#f4f6f7">
      <g opacity=".6">${knurl}</g>
      <ellipse cx=${cx} cy="148" rx="19.500" ry="11"/>
      <ellipse cx=${cx} cy="235" rx="19.500" ry="11"/>
      <path d="M966.500 148V616M1005.500 148V616" stroke-width="1.400"/>
      <path d="M972.500 240V620M999.500 240V620" stroke-width="1.200"/>
      ${range(14).map((k) => svg`<ellipse cx=${cx} cy=${564 + k * 4} rx="19.500" ry="11" stroke-width="1.300"/>`)}
      ${range(11).map((k) => svg`<ellipse cx=${cx} cy=${570 + k * 4} rx="14" ry="8" opacity=".8"/>`)}
    </g>`;
  }

  render() {
    return html`
      <svg class="scene" aria-hidden="true">
        ${this.grid()}${this.shaft()}
        <g fill="none" stroke-width="1.300">
          <path d="M222.500 41V128" stroke="#7a78d8"/>
          <path d="M197 85L273 128" stroke="#c9697c"/>
          <path d="M197 114L273 70" stroke="#74d086"/>
          <rect x="219.500" y="96.500" width="6" height="6" stroke="#fff" fill="#212830"/>
        </g>
        <text x="227" y="45" fill="#7f9fb6">Z</text>
        <text x="274" y="85" fill="#62d850">Y</text>
        <text x="274" y="143" fill="#b29a62">X</text>
        <g fill="none" stroke="#f2f4f6" stroke-width="1.200">
          <path d="M23.500 774V732M24 773L59 753M24 773L59 793"/>
          <path d="M17 773L24 769L31 773L24 777z"/>
          <path d="M24 769L28 773L24 777"/>
        </g>
        <text class="ucs" x="28" y="731">Z</text>
        <text class="ucs" x="60" y="749">Y</text>
        <text class="ucs" x="63" y="792">X</text>
      </svg>
      <div class="state"><button>[–]</button><button>[SE Isometric]</button><button>[2D Wireframe]</button></div>
      <div class="ctl">
        <button aria-label="Minimize drawing">${ic("wmin", 16)}</button>
        <button aria-label="Restore drawing">${ic("wrestore", 14)}</button>
        <button aria-label="Close drawing">${ic("wclose", 12)}</button>
      </div>
      <svg class="cube" width="140" height="130" viewBox="0 0 140 130" role="img" aria-label="View cube">
        <path d="M29 46Q10 56 10 73C10 93 36 107 67 107S124 93 124 73Q124 56 105 46" fill="none" stroke="#474d59" stroke-width="13"/>
        <g fill="#bfc2c8">
          <text transform="translate(20 43) rotate(32)" font-size="14">W</text>
          <text transform="translate(102 41) rotate(32)" font-size="12">N</text>
          <text transform="translate(10 98) rotate(30)" font-size="20">S</text>
          <text transform="translate(111 105) rotate(-40)" font-size="19">E</text>
        </g>
        <path d="M67 8L101 25L67 45L33 25z" fill="#c0c2c1"/>
        <path d="M33 25L67 45V85L34 65z" fill="#b0b2b1"/>
        <path d="M101 25L67 45V85L100 65z" fill="#a5a7a6"/>
        <path d="M33 25L67 45L101 25M67 45V85" fill="none" stroke="#4c4f52"/>
        <g fill="#4a4d50">
          <text transform="translate(57 22) rotate(28) skewX(-25)" font-size="8">TOP</text>
          <text transform="translate(38 44) skewY(30)" font-size="8">FRONT</text>
          <text transform="translate(72 62) skewY(-30)" font-size="8">RIGHT</text>
        </g>
      </svg>
      <button class="wcs">WCS</button>
      <svg class="nav" width="32" height="212" viewBox="0 0 32 212" role="img" aria-label="Navigation bar">
        <g fill="none" stroke="#484c51" stroke-width="1.300">
          <circle cx="18" cy="30" r="10"/><rect x="13" y="24" width="10" height="12" rx="3"/>
          <path d="M8 70Q4 64 8 66L13 72M13 72V64M16 70L22 62M18 72L26 65M20 75L27 70M13 72Q10 82 18 83T26 74"/>
          <path d="M6 90L24 108M24 90L6 108M18 104L27 112"/>
          <path d="M17 130V150M10 136V146M24 134V144M6 142H28"/>
          <rect x="5" y="170" width="22" height="8"/><rect x="5" y="178" width="15" height="13"/>
          <path d="M5 174H27M10 170V178M15 170V178M20 170V178M22 3H28V9H22zM22 204H28V210H22z"/>
        </g>
        <g fill="#484c51"><path d="M15 49h5l-2 3zM15 119h5l-2 3zM15 157h5l-2 3z"/><circle cx="12" cy="184" r="2.500"/></g>
      </svg>
      <div class="cmd">
        <span class="grip"></span>
        <button class="x" aria-label="Close command line">${ic("close", 18)}</button>
        <button class="w" aria-label="Customize">${ic("wrench", 16)}</button>
        <div class="line">
          ${ic("terminal", 17)}${caret()}
          <input type="text" aria-label="Command" placeholder="Type a command" />
          <button aria-label="Command history">${caret("up")}</button>
        </div>
      </div>`;
  }
}

/* ---------- status bar ---------- */

@customElement("cad-status")
class CadStatus extends LitElement {
  static styles = [shared, css`
    :host { display: flex; height: 29px; border-top: 1px solid #3a4151; background: #222935; color: #e6e9ed; }
    .sheets { display: flex; padding-left: 14px; color: #b3b9c3; }
    .sheets button { height: 18px; padding: 0 9px; margin-right: 2px; background: #29303c; border-radius: 0 0 8px 8px; }
    .sheets .on { background: #3c4354; color: #fff; font-weight: 700; }
    .sheets .add { padding: 0 6px; }
    .tools { display: flex; gap: 3px; padding: 1px 2px 1px; height: 27px; }
    .grp { display: flex; align-items: center; background: #383f50; }
    .grp:last-child { margin-left: 4px; }
    .grp button { width: 24px; height: 24px; border: 1px solid transparent; background-clip: padding-box; }
    .grp .on { background-color: #5c89bf; }
    .grp .d { width: 16px; }
    .grp .pos { width: 149px; justify-content: flex-end; padding-right: 2px; }
    .grp .model { width: 47px; }
    .grp .scale { width: 34px; gap: 5px; }
    .grp .unit { width: 74px; justify-content: space-between; padding: 0 3px; }
  `];
  private b(n: string, on = false) {
    return html`<button class=${on ? "on" : ""} aria-label=${n} aria-pressed=${on}>${ic(n)}</button>`;
  }
  private d() {
    return html`<button class="d" aria-label="Options">${caret("mid")}</button>`;
  }
  render() {
    return html`
      <nav class="sheets"><button class="on">Model</button><button>Layout1</button>
        <button class="add" aria-label="New layout">${ic("plus", 18)}</button></nav>
      <span class="spacer"></span>
      <div class="tools">
        <div class="grp"><button class="pos">-11.2496, 0.8974, 0.0000</button></div>
        <div class="grp"><button class="model">MODEL</button></div>
        <div class="grp">${this.b("sGrid", true)}${this.b("sSnap")}${this.d()}</div>
        <div class="grp">${this.b("sDyn", true)}${this.b("sOrtho")}${this.b("sPolar", true)}${this.d()}${this.b("sIso")}${this.d()}</div>
        <div class="grp">${this.b("sTrack", true)}${this.b("sOsnap", true)}${this.d()}</div>
        <div class="grp">${this.b("sDucs", true)}</div>
        <div class="grp">${this.b("sAnnoVis", true)}${this.b("sAnnoAuto", true)}${this.b("sAnno")}
          <button class="scale">1:1${caret("mid")}</button></div>
        <div class="grp">${this.b("sGear")}${this.d()}</div>
        <div class="grp">${this.b("sPlus")}</div>
        <div class="grp">${this.b("sRuler")}<button class="unit">Decimal${caret("mid")}</button></div>
        <div class="grp">${this.b("sShapes")}</div>
        <div class="grp">${this.b("sHw")}</div>
        <div class="grp">${this.b("sFull")}${this.b("sMenu")}</div>
      </div>`;
  }
}

/* ---------- desktop task bar ---------- */

const APPS: { name: string; art: unknown; state?: string; badge?: string }[] = [
  { name: "File Explorer", state: "run", art: svg`<path d="M1 3h8l2 2h12v17H1z" fill="#e9b13c"/><path d="M1 7h22v15H1z" fill="#fbd66b"/><path d="M4 13h16v10h-4v-4H8v4H4z" fill="#3f97dd"/>` },
  { name: "Snip & Sketch", art: svg`<ellipse cx="11" cy="9" rx="10" ry="8" fill="#f1e4e6" stroke="#c9525e"/><path d="M5 12L17 4" stroke="#c9525e"/><path d="M12 10l3 8M16 9l-3 8" stroke="#8fc2e6" stroke-width="2"/><circle cx="13" cy="20" r="2.500" fill="none" stroke="#2a86d1" stroke-width="2"/><circle cx="20" cy="18" r="2.500" fill="none" stroke="#2a86d1" stroke-width="2"/>` },
  { name: "PowerPoint", art: svg`<path d="M4 1h14l5 5v17H4z" fill="#f7e6dd" stroke="#d35230"/><rect x="1" y="6" width="16" height="14" rx="1" fill="#d9481f"/><rect x="5" y="9" width="8" height="8" fill="#fbe2d6"/><path d="M7 16v-5h3v3h-3" fill="none" stroke="#d9481f" stroke-width="1.500"/><circle cx="18" cy="12" r="3" fill="#ef8b68"/>` },
  { name: "Remote", art: svg`<rect x="5" y="1" width="17" height="13" fill="#2f62c9" stroke="#c3cbd6"/><path d="M2 6h12v8H2z" fill="#9dbbe9" stroke="#2b4f9c"/><ellipse cx="14" cy="20" rx="7" ry="3" fill="#c8ccd0"/><rect x="13" y="14" width="4" height="5" fill="#a4abb4"/>` },
  { name: "Paint", art: svg`<path d="M11 4C3 4 1 10 2 15S9 23 12 21 11 17 14 16 22 15 21 10 16 4 11 4z" fill="#cfe5f5"/><circle cx="7" cy="10" r="2" fill="#e2505f"/><circle cx="12" cy="8" r="2" fill="#f2b632"/><circle cx="6" cy="15" r="2" fill="#43a563"/><circle cx="17" cy="11" r="2" fill="#3a7fd0"/><path d="M14 20L20 4" stroke="#b0793f" stroke-width="2"/><path d="M19 4l2-4 1 5z" fill="#e9cf9b"/>` },
  { name: "Notepad", art: svg`<path d="M8 2h14l-5 20H2z" fill="#8fc7cf"/><path d="M8 2h14l-1 4H7z" fill="#dfeaec"/><path d="M17 22l5-20 1 2-4 18z" fill="#4f7d88"/>` },
  { name: "Event Viewer", art: svg`<rect x="3" y="1" width="19" height="17" fill="#e9f0f6"/><rect x="3" y="1" width="19" height="3" fill="#3d78b8"/><path d="M5 7h5M5 10h4M5 13h4" stroke="#7d8fa4"/><circle cx="14" cy="11" r="5.500" fill="#bfe0f4" stroke="#7d97ad" stroke-width="1.500"/><path d="M10 15L3 23" stroke="#b0793f" stroke-width="3"/>` },
  { name: "Mail", badge: "33", art: svg`<path d="M1 8L12 0L23 8V22H1z" fill="#1b6fc0"/><path d="M2 8h20l-10 8z" fill="#e8eef4"/><path d="M1 9l11 8 11-8v13H1z" fill="#2f9be8"/>` },
  { name: "Office", art: svg`<path d="M4 5L14 1L20 3V21L14 23L4 19L14 20V5L8 7V17L4 19z" fill="#c8281c"/><path d="M14 1L20 3V21L14 23z" fill="#f2622c"/>` },
  { name: "Firefox", state: "run", art: svg`<circle cx="12" cy="13" r="10.500" fill="#f4732a"/><path d="M3 7Q2 20 12 23.500Q22 22 22.500 13Q22 6 16 2Q18 7 14 8Q9 4 3 7z" fill="#fbb52b"/><path d="M2 9Q2 22 12 23.500Q20 23 22 16Q17 22 10 19Q4 15 7 8z" fill="#ee3b59"/><circle cx="12" cy="13" r="5" fill="#7a4fd6"/><path d="M8 9q4-2 7 1l-5 2z" fill="#fbb52b"/>` },
  { name: "Camtasia", state: "run", art: svg`<rect width="24" height="24" rx="2" fill="#f0564a"/><path d="M18 6H10Q6 6 6 10V14Q6 18 10 18H18" fill="none" stroke="#fff" stroke-width="4"/>` },
  { name: "Snipping Tool", art: svg`<path d="M3 6Q8-2 17 2Q23 6 19 15L13 18Q20 10 15 5Q9 2 5 8z" fill="#d8421f"/><path d="M12 2v12l-6 5M12 11l5 8" fill="none" stroke="#cfd3d8" stroke-width="2.500"/><circle cx="5" cy="20" r="3" fill="none" stroke="#2a86d1" stroke-width="2"/><circle cx="16" cy="20" r="3" fill="none" stroke="#2a86d1" stroke-width="2"/>` },
  { name: "AutoCAD", state: "run active", art: svg`<rect width="24" height="24" fill="#fbe9e6"/><path d="M4 21L10 3H15L20 18L16 19L15 15H10L8 20z" fill="#b3202e"/><path d="M11 12L12.500 7L14 12z" fill="#fbe9e6"/><path d="M4 21L8 16L8 20z" fill="#7d1420"/>` },
  { name: "Photos", state: "run", art: svg`<rect x="1" y="1" width="22" height="22" rx="2" fill="#35b3ee"/><path d="M1 13L8 8L23 20V23H1z" fill="#1254a6"/><path d="M12 12L17 9L23 14V23z" fill="#5d7de0"/><circle cx="16" cy="6" r="2" fill="#fff"/>` },
];

@customElement("desk-bar")
class DeskBar extends LitElement {
  static styles = [shared, css`
    :host { display: flex; height: 40px; background: #2c291f; color: #f2f2f0; font-size: 14px; }
    .start { width: 48px; background: #30272a; }
    .find { display: flex; width: 344px; align-items: center; gap: 8px; padding-left: 10px; background: #f1f1f1; border: 1px solid #c9c9c9; }
    .find input { flex: 1; min-width: 0; color: #2e2e2e; outline: none; font-size: 14px; }
    .find input::placeholder { color: #3a3a3a; opacity: 1; }
    .sys { width: 49px; }
    .app { position: relative; width: 49px; }
    .run::after { content: ""; position: absolute; left: 4px; right: 5px; bottom: 0; height: 2px; background: #f58a78; }
    .active { background: #5b574c; }
    .active::after { left: 0; right: 0; }
    .badge { position: absolute; left: 27px; top: 16px; width: 20px; height: 20px; border: 1px solid #c9ccd0; border-radius: 10px; background: #2a3440; color: #fff; font-size: 12px; line-height: 18px; }
    .tray { display: flex; }
    .weather { gap: 8px; padding-right: 8px; }
    .weather .sky { white-space: pre; }
    .t { width: 25px; }
    .pen { width: 30px; }
    .clock { width: 56px; padding-left: 8px; flex-direction: column; font-size: 12px; line-height: 18px; }
    .note { width: 56px; }
    .edge { width: 5px; height: 40px; border-left: 1px solid #8a887f; }
  `];
  private t(name: string, art: unknown, cls = "t") {
    return html`<button class=${cls} aria-label=${name}><svg class="ic" width="18" height="18" viewBox="0 0 18 18"
      fill="none" stroke="#f2f2f0" stroke-width="1.300">${art}</svg></button>`;
  }
  render() {
    return html`
      <button class="start" aria-label="Start"><svg class="ic" width="16" height="16" viewBox="0 0 16 16" fill="#fff">
        <path d="M0 2L7 1V7.500H0zM8 1L16 0V7.500H8zM0 8.500H7V15L0 14zM8 8.500H16V16L8 15z"/></svg></button>
      <label class="find"><svg class="ic" width="20" height="20" viewBox="0 0 20 20" fill="none" stroke="#222" stroke-width="1.300">
        <circle cx="12" cy="7" r="5.500"/><path d="M8 11L2 18"/></svg>
        <input type="text" aria-label="Search" placeholder="Type here to search" /></label>
      <button class="sys" aria-label="Cortana"><svg class="ic" width="18" height="18" viewBox="0 0 18 18">
        <circle cx="9" cy="9" r="6.500" fill="none" stroke="#fff" stroke-width="2"/></svg></button>
      <button class="sys" aria-label="Task view"><svg class="ic" width="18" height="18" viewBox="0 0 18 18" fill="none" stroke="#fff" stroke-width="1.300">
        <path d="M2 6H12V12H2zM2 1V3H12V1M2 17V15H12V17M16 2V17"/><rect x="15" y="6" width="2" height="3" fill="#fff"/></svg></button>
      ${APPS.map((a) => html`<button class="app ${a.state ?? ""}" aria-label=${a.name}>
        <svg class="ic" width="24" height="24" viewBox="0 0 24 24" fill="none">${a.art}</svg>
        ${a.badge ? html`<span class="badge">${a.badge}</span>` : nothing}</button>`)}
      <span class="spacer"></span>
      <div class="tray">
        <button class="weather"><svg class="ic" width="22" height="22" viewBox="0 0 22 22"><circle cx="10" cy="11" r="9" fill="#f9c52e"/>
          <path d="M8 16Q7 12 11 12Q13 8 16 11Q21 11 20 15Q19 17 17 17H10z" fill="#dfe6ee"/><rect x="14" y="2" width="5" height="9" fill="#d8232f"/></svg>
          <span class="sky">69°F  Mostly sunny</span></button>
        ${this.t("Hidden icons", svg`<path d="M3 11L9 5L15 11" stroke-width="1.600"/>`)}
        ${this.t("Microphone", svg`<rect x="6" y="1" width="6" height="11" rx="1" fill="#f2f2f0"/><path d="M4 10Q4 14 9 14T14 10M9 14V17M6 17H12"/>`)}
        ${this.t("Meet now", svg`<rect x="4" y="6" width="7" height="7" rx="1"/><path d="M11 9L14 7V12L11 10M4 4Q8 0 12 4M4 15Q8 19 12 15"/>`)}
        ${this.t("Network", svg`<path d="M3 16Q3 5 16 4M6 16Q7 9 16 8M9 16Q10 12 16 12"/><circle cx="14" cy="15" r="1.500" fill="#f2f2f0"/>`)}
        ${this.t("Volume", svg`<path d="M2 7H5L9 3V15L5 11H2zM11 7Q12 9 11 11M13 5Q16 9 13 13"/><path d="M15 3Q19 9 15 15" stroke="#77756c"/>`)}
        ${this.t("Pen", svg`<path d="M5 9Q1 10 2 13T7 14L13 3Q15 1 15 4L9 15M8 15Q12 7 13 10T17 9" stroke-width="1.500"/>`, "pen")}
        <button class="clock"><span>1:53 PM</span><span>2/1/2022</span></button>
        ${this.t("Notifications", svg`<path d="M1 2H17V13H11L9 16L8 13H1z" fill="#fff"/><path d="M4 5H14M4 8H14M4 10.500H10" stroke="#2c291f"/>`, "note")}
        <span class="edge"></span>
      </div>`;
  }
}

@customElement("app-root")
class AppRoot extends LitElement {
  static styles = css`
    :host { display: flex; flex-direction: column; min-height: 100vh; background: #222933; font: 12px/16px "Open Sans", "Noto Sans", sans-serif; }
    .main { flex: 1; display: flex; gap: 1px; }
    .left { width: 23px; }
    .right { width: 21px; }
    cad-canvas { flex: 1; min-width: 0; }
  `;
  render() {
    return html`
      <cad-title></cad-title>
      <cad-ribbon></cad-ribbon>
      <cad-tabs></cad-tabs>
      <div class="main">
        <cad-dock class="left" .names=${["Properties", "Layer Properties Manager"]}></cad-dock>
        <cad-canvas></cad-canvas>
        <cad-dock class="right" .names=${["Materials Browser", "Tool Palettes - All Palettes", "QuickCalc", "Blocks"]}></cad-dock>
      </div>
      <cad-status></cad-status>
      <desk-bar></desk-bar>`;
  }
}
